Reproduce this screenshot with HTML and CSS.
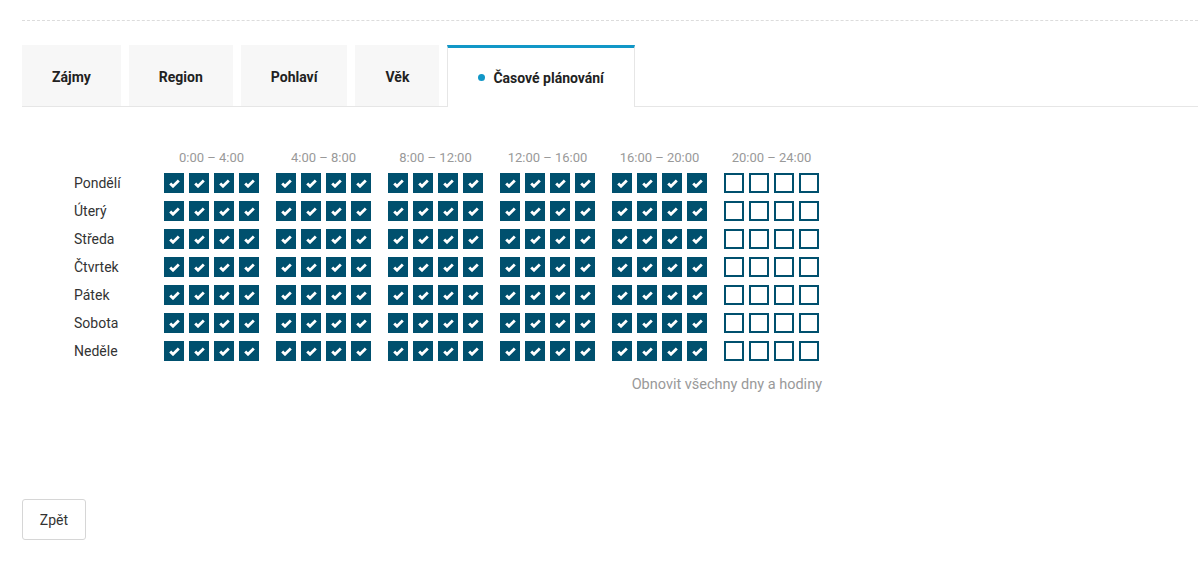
FILE: index.html
```html
<!DOCTYPE html>
<html lang="cs">
<head>
    <meta charset="UTF-8">
    <meta name="viewport" content="width=device-width, initial-scale=1.0">
    <title>Časové plánování</title>
    <link rel="stylesheet" href="styles.css">
</head>
<body>
    <div class="page">
        <div class="tabs">
            <div class="tab">Zájmy</div>
            <div class="tab">Region</div>
            <div class="tab">Pohlaví</div>
            <div class="tab">Věk</div>
            <div class="tab active"><span class="dot"></span>Časové plánování</div>
        </div>

        <div class="schedule">
            <div class="grid" id="grid">
                <div class="head">
                    <div class="label"></div>
                    <div class="group-title">0:00 – 4:00</div>
                    <div class="group-title">4:00 – 8:00</div>
                    <div class="group-title">8:00 – 12:00</div>
                    <div class="group-title">12:00 – 16:00</div>
                    <div class="group-title">16:00 – 20:00</div>
                    <div class="group-title">20:00 – 24:00</div>
                </div>
            </div>
            <div class="reset">Obnovit všechny dny a hodiny</div>
        </div>

        <button class="back">Zpět</button>
    </div>
    <script>
        const days = ['Pondělí', 'Úterý', 'Středa', 'Čtvrtek', 'Pátek', 'Sobota', 'Neděle'];
        const check = '<svg width="11" height="9" viewBox="0 0 11 9"><path d="M1.2 4.4 L4 7.2 L9.8 1.4" fill="none" stroke="#fff" stroke-width="2.8"/></svg>';
        const grid = document.getElementById('grid');

        days.forEach(function (day) {
            let row = '<div class="row"><div class="label">' + day + '</div>';
            for (let g = 0; g < 6; g++) {
                row += '<div class="group">';
                for (let h = 0; h < 4; h++) {
                    if (g < 5) {
                        row += '<span class="box on">' + check + '</span>';
                    } else {
                        row += '<span class="box"></span>';
                    }
                }
                row += '</div>';
            }
            row += '</div>';
            grid.insertAdjacentHTML('beforeend', row);
        });
    </script>
</body>
</html>
```

FILE: styles.css
```css
body {
    margin: 0;
    font-family: Roboto, "Liberation Sans", Arial, sans-serif;
    color: #333;
    background: #fff;
}
.page {
    margin: 20px 0 0 22px;
    border-top: 1px dashed #dcdcdc;
    padding-top: 24px;
}
.tabs {
    display: flex;
    gap: 8px;
    border-bottom: 1px solid #e6e6e6;
}
.tab {
    height: 61px;
    padding: 2px 30px 0;
    display: flex;
    align-items: center;
    background: #f7f7f7;
    font-size: 14px;
    font-weight: bold;
    color: #222;
    box-sizing: border-box;
}
.tab.active {
    background: #fff;
    border: 1px solid #e6e6e6;
    border-top: 3px solid #1197c7;
    border-bottom: none;
    height: 62px;
    margin-bottom: -1px;
    padding: 0 30px;
}
.dot {
    width: 7px;
    height: 7px;
    border-radius: 50%;
    background: #1197c7;
    margin-right: 8px;
}
.schedule {
    padding: 42px 0 0 52px;
    width: 748px;
}
.grid {
    display: flex;
    flex-direction: column;
    gap: 8px;
}
.head, .row {
    display: flex;
    align-items: center;
    gap: 17px;
}
.head {
    height: 16px;
}
.label {
    width: 73px;
    font-size: 14px;
    color: #333;
}
.group-title {
    width: 95px;
    text-align: center;
    font-size: 13px;
    color: #999;
}
.group {
    display: flex;
    gap: 5px;
}
.box {
    width: 20px;
    height: 20px;
    box-sizing: border-box;
    border: 2px solid #00506e;
    display: flex;
    align-items: center;
    justify-content: center;
}
.box.on {
    background: #00506e;
}
.reset {
    margin-top: 14px;
    line-height: 20px;
    text-align: right;
    font-size: 14.5px;
    color: #999;
}
.back {
    margin-top: 104px;
    width: 64px;
    height: 41px;
    background: #fff;
    border: 1px solid #d6d6d6;
    border-radius: 3px;
    font-family: inherit;
    font-size: 14px;
    color: #333;
}
```
